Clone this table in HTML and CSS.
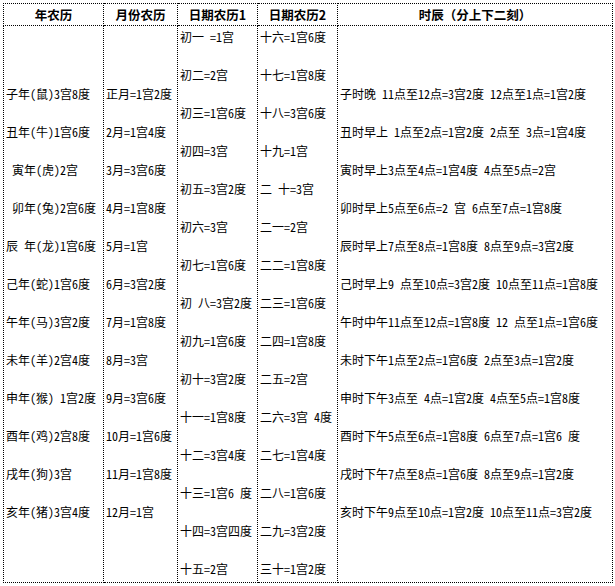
FILE: index.html
```html
<!DOCTYPE html>
<html lang="zh-CN">
<head>
<meta charset="utf-8">
<title>农历宫度表</title>
<link rel="stylesheet" href="styles.css">
</head>
<body>
<table class="grid">
  <colgroup>
    <col class="c1"><col class="c2"><col class="c3"><col class="c4"><col class="c5">
  </colgroup>
  <thead>
    <tr class="head">
      <th>年农历</th>
      <th>月份农历</th>
      <th>日期农历1</th>
      <th>日期农历2</th>
      <th>时辰（分上下二刻）</th>
    </tr>
  </thead>
  <tbody>
    <tr class="body">
      <td>
        <div class="list">
          <p>子年(鼠)3宫8度</p>
          <p>丑年(牛)1宫6度</p>
          <p>&nbsp;寅年(虎)2宫</p>
          <p>&nbsp;卯年(兔)2宫6度</p>
          <p>辰 年(龙)1宫6度</p>
          <p>己年(蛇)1宫6度</p>
          <p>午年(马)3宫2度</p>
          <p>未年(羊)2宫4度</p>
          <p>申年(猴) 1宫2度</p>
          <p>酉年(鸡)2宫8度</p>
          <p>戌年(狗)3宫</p>
          <p>亥年(猪)3宫4度</p>
        </div>
      </td>
      <td>
        <div class="list">
          <p>正月=1宫2度</p>
          <p>2月=1宫4度</p>
          <p>3月=3宫6度</p>
          <p>4月=1宫8度</p>
          <p>5月=1宫</p>
          <p>6月=3宫2度</p>
          <p>7月=1宫8度</p>
          <p>8月=3宫</p>
          <p>9月=3宫6度</p>
          <p>10月=1宫6度</p>
          <p>11月=1宫8度</p>
          <p>12月=1宫</p>
        </div>
      </td>
      <td>
        <div class="list">
          <p>初一 =1宫</p>
          <p>初二=2宫</p>
          <p>初三=1宫6度</p>
          <p>初四=3宫</p>
          <p>初五=3宫2度</p>
          <p>初六=3宫</p>
          <p>初七=1宫6度</p>
          <p>初 八=3宫2度</p>
          <p>初九=1宫6度</p>
          <p>初十=3宫2度</p>
          <p>十一=1宫8度</p>
          <p>十二=3宫4度</p>
          <p>十三=1宫6 度</p>
          <p>十四=3宫四度</p>
          <p>十五=2宫</p>
        </div>
      </td>
      <td>
        <div class="list">
          <p>十六=1宫6度</p>
          <p>十七=1宫8度</p>
          <p>十八=3宫6度</p>
          <p>十九=1宫</p>
          <p>二 十=3宫</p>
          <p>二一=2宫</p>
          <p>二二=1宫8度</p>
          <p>二三=1宫6度</p>
          <p>二四=1宫8度</p>
          <p>二五=2宫</p>
          <p>二六=3宫 4度</p>
          <p>二七=1宫4度</p>
          <p>二八=1宫6度</p>
          <p>二九=3宫2度</p>
          <p>三十=1宫2度</p>
        </div>
      </td>
      <td>
        <div class="list">
          <p>子时晚 11点至12点=3宫2度 12点至1点=1宫2度</p>
          <p>丑时早上 1点至2点=1宫2度 2点至 3点=1宫4度</p>
          <p>寅时早上3点至4点=1宫4度 4点至5点=2宫</p>
          <p>卯时早上5点至6点=2 宫 6点至7点=1宫8度</p>
          <p>辰时早上7点至8点=1宫8度 8点至9点=3宫2度</p>
          <p>己时早上9 点至10点=3宫2度 10点至11点=1宫8度</p>
          <p>午时中午11点至12点=1宫8度 12 点至1点=1宫6度</p>
          <p>未时下午1点至2点=1宫6度 2点至3点=1宫2度</p>
          <p>申时下午3点至 4点=1宫2度 4点至5点=1宫8度</p>
          <p>酉时下午5点至6点=1宫8度 6点至7点=1宫6 度</p>
          <p>戌时下午7点至8点=1宫6度 8点至9点=1宫2度</p>
          <p>亥时下午9点至10点=1宫2度 10点至11点=3宫2度</p>
        </div>
      </td>
    </tr>
  </tbody>
</table>
</body>
</html>
```
FILE: styles.css
```css
html, body {
  margin: 0;
  padding: 0;
  background: #ffffff;
}

body {
  padding: 3px 0 0 3px;
  font-family: "Noto Sans CJK SC", "Liberation Sans", sans-serif;
  font-size: 12px;
  color: #000000;
}

.grid {
  border-collapse: collapse;
  table-layout: fixed;
  width: 609px;
}

.c1 { width: 100px; }
.c2 { width: 74px; }
.c3 { width: 80px; }
.c4 { width: 80px; }
.c5 { width: 275px; }

.grid th,
.grid td {
  border: 1px dotted #000000;
}

.head th {
  height: 21px;
  padding: 0;
  font-size: 12.5px;
  font-weight: bold;
  text-align: center;
  vertical-align: middle;
  line-height: 21px;
  white-space: nowrap;
}

.body td {
  height: 556px;
  padding: 0 2px;
  vertical-align: middle;
  text-align: left;
  font-feature-settings: "hwid" 1;
}

.list {
  margin-bottom: 4px;
}

.list p {
  margin: 0 0 19px 0;
  line-height: 19px;
  white-space: nowrap;
}

.list p:last-child {
  margin-bottom: 0;
}
```
